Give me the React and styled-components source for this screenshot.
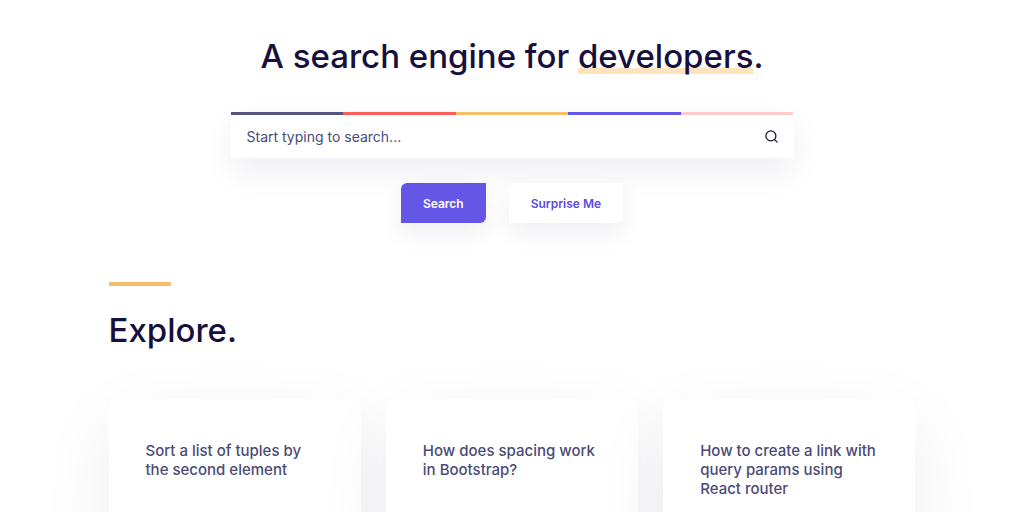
import React, { useState } from 'react';
import styled, { createGlobalStyle } from 'styled-components';
import { FiSearch } from 'react-icons/fi';

const GlobalStyle = createGlobalStyle`
  *, *::before, *::after {
    box-sizing: border-box;
  }
  body {
    margin: 0;
    background: #fff;
    color: #170f3d;
    font-family: Inter, sans-serif;
  }
  h1, h2, h3 {
    margin: 0;
    font-weight: 500;
  }
`;

const Page = styled.div`
  max-width: 855px;
  margin: 0 auto;
  padding: 32px 24px 64px;
`;

const Hero = styled.header`
  display: flex;
  flex-direction: column;
  align-items: center;
`;

const Title = styled.h1`
  font-size: 33px;
  line-height: 48px;
  text-align: center;
`;

const Highlight = styled.span`
  background: linear-gradient(#fde4bf, #fde4bf) 0 32px / 100% 6px no-repeat;
`;

const SearchForm = styled.form`
  width: 100%;
  max-width: 563px;
  margin-top: 32px;
`;

const SearchBox = styled.div`
  background: #fff;
  box-shadow: 0 14px 32px rgba(23, 15, 61, 0.07);
`;

const ColorBar = styled.div`
  display: flex;
  height: 3px;
`;

const ColorSegment = styled.div`
  flex: 1;
  background: ${props => props.$color};
`;

const Field = styled.label`
  display: flex;
  align-items: center;
  height: 43px;
  padding: 0 15px 0 16px;
`;

const SearchInput = styled.input`
  flex: 1;
  min-width: 0;
  padding: 0;
  border: 0;
  outline: 0;
  background: none;
  color: #4a4b76;
  font-family: inherit;
  font-size: 14px;
  line-height: 20px;

  &::placeholder {
    color: #4a4b76;
    opacity: 1;
  }
`;

const Actions = styled.div`
  display: flex;
  justify-content: center;
  gap: 23px;
  margin-top: 25px;
`;

const Button = styled.button`
  height: 40px;
  padding: 0 22px;
  border: 0;
  border-radius: 6px 0;
  background: ${props => (props.$primary ? '#6556e8' : '#fff')};
  color: ${props => (props.$primary ? '#fff' : '#5b4be0')};
  box-shadow: 0 10px 24px rgba(23, 15, 61, 0.07);
  font-family: inherit;
  font-size: 12px;
  font-weight: 600;
  cursor: pointer;
`;

const Explore = styled.section`
  margin-top: 59px;
`;

const Accent = styled.div`
  width: 62px;
  height: 4px;
  background: #f5bd6c;
`;

const SectionTitle = styled.h2`
  margin-top: 20px;
  font-size: 33px;
  line-height: 48px;
`;

const Cards = styled.div`
  display: grid;
  grid-template-columns: repeat(auto-fit, minmax(220px, 1fr));
  gap: 25px;
  margin-top: 44px;
`;

const Card = styled.article`
  min-height: 260px;
  padding: 43px 37px;
  border-radius: 10px;
  background: #fff;
  box-shadow: 0 25px 75px rgba(23, 15, 61, 0.07);
`;

const CardTitle = styled.h3`
  color: #4a4b76;
  font-size: 15px;
  line-height: 19px;
`;

const barColors = ['#54547c', '#fb5f5b', '#f5bd6c', '#6556e8', '#fdcaca'];

const questions = [
    'Sort a list of tuples by the second element',
    'How does spacing work in Bootstrap?',
    'How to create a link with query params using React router',
];

const App = () => {
    const [query, setQuery] = useState('');

    return (
        <>
            <GlobalStyle />
            <Page>
                <Hero>
                    <Title>
                        A search engine for <Highlight>developers</Highlight>.
                    </Title>
                    <SearchForm onSubmit={e => e.preventDefault()}>
                        <SearchBox>
                            <ColorBar>
                                {barColors.map(color => (
                                    <ColorSegment key={color} $color={color} />
                                ))}
                            </ColorBar>
                            <Field>
                                <SearchInput
                                    type="text"
                                    aria-label="Search"
                                    placeholder="Start typing to search..."
                                    value={query}
                                    onChange={e => setQuery(e.target.value)}
                                />
                                <FiSearch size={15} color="#170f3d" aria-hidden="true" />
                            </Field>
                        </SearchBox>
                        <Actions>
                            <Button type="submit" $primary>Search</Button>
                            <Button type="button">Surprise Me</Button>
                        </Actions>
                    </SearchForm>
                </Hero>
                <Explore>
                    <Accent />
                    <SectionTitle>Explore.</SectionTitle>
                    <Cards>
                        {questions.map(question => (
                            <Card key={question}>
                                <CardTitle>{question}</CardTitle>
                            </Card>
                        ))}
                    </Cards>
                </Explore>
            </Page>
        </>
    );
};

export default App;
